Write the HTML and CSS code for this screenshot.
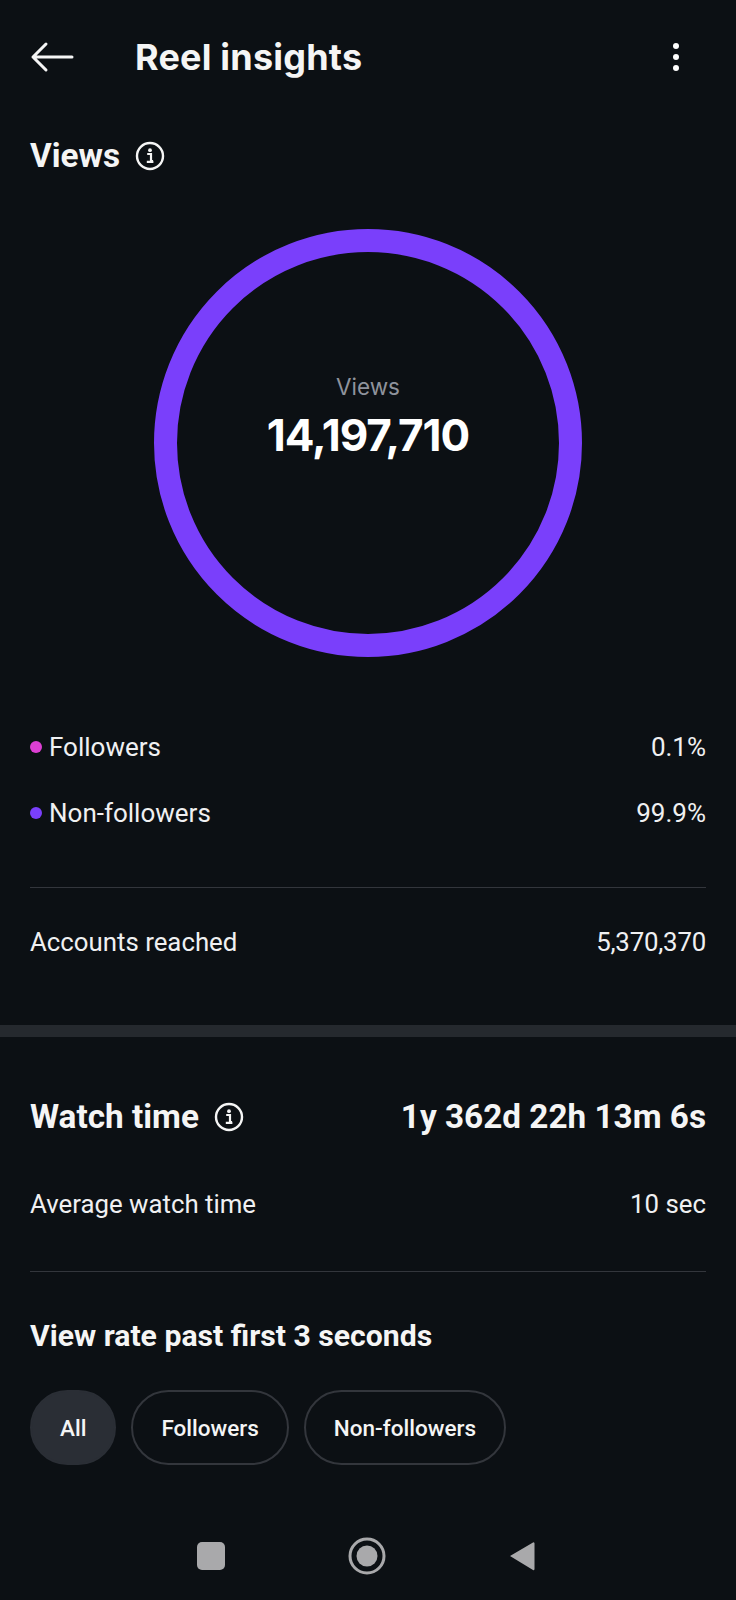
FILE: index.html
```html
<!DOCTYPE html>
<html lang="en">
<head>
<meta charset="utf-8">
<title>Reel insights</title>
<link rel="stylesheet" href="styles.css">
</head>
<body>
<div class="screen">
  <header class="topbar">
    <svg class="back" viewBox="0 0 44 32" width="44" height="32"><path d="M42 16H3M16 3 3 16l13 13" fill="none" stroke="#f5f5f5" stroke-width="3" stroke-linecap="round" stroke-linejoin="round"/></svg>
    <h1 class="title">Reel insights</h1>
    <svg class="more" viewBox="0 0 8 32" width="8" height="32"><circle cx="4" cy="5" r="3" fill="#fff"/><circle cx="4" cy="16" r="3" fill="#fff"/><circle cx="4" cy="27" r="3" fill="#fff"/></svg>
  </header>

  <section class="views">
    <div class="heading">
      <h2 class="h2">Views</h2>
      <svg class="info" viewBox="0 0 30 30" width="30" height="30"><circle cx="15" cy="15" r="13" fill="none" stroke="#f5f5f5" stroke-width="2.4"/><circle cx="15" cy="9.2" r="1.9" fill="#f5f5f5"/><path d="M12.2 13h3.8v7.2h2M11.8 20.8h6.6" fill="none" stroke="#f5f5f5" stroke-width="2.2"/></svg>
    </div>
    <div class="ring">
      <span class="ring-label">Views</span>
      <span class="ring-value">14,197,710</span>
    </div>
    <div class="row legend"><span class="key"><i class="dot pink"></i>Followers</span><span>0.1%</span></div>
    <div class="row legend second"><span class="key"><i class="dot violet"></i>Non-followers</span><span>99.9%</span></div>
    <hr class="rule rule-a">
    <div class="row reached"><span>Accounts reached</span><span class="num">5,370,370</span></div>
  </section>

  <div class="band"></div>

  <section class="watch">
    <div class="row watch-head">
      <div class="heading">
        <h2 class="h2">Watch time</h2>
        <svg class="info" viewBox="0 0 30 30" width="30" height="30"><circle cx="15" cy="15" r="13" fill="none" stroke="#f5f5f5" stroke-width="2.4"/><circle cx="15" cy="9.2" r="1.9" fill="#f5f5f5"/><path d="M12.2 13h3.8v7.2h2M11.8 20.8h6.6" fill="none" stroke="#f5f5f5" stroke-width="2.2"/></svg>
      </div>
      <strong class="h2">1y 362d 22h 13m 6s</strong>
    </div>
    <div class="row avg"><span>Average watch time</span><span>10 sec</span></div>
    <hr class="rule rule-b">
    <h3 class="h3">View rate past first 3 seconds</h3>
    <div class="pills">
      <span class="pill active">All</span>
      <span class="pill">Followers</span>
      <span class="pill">Non-followers</span>
    </div>
  </section>

  <nav class="sysnav">
    <svg viewBox="0 0 28 28" width="28" height="28"><rect width="28" height="28" rx="5" fill="#a9a9ab"/></svg>
    <svg viewBox="0 0 38 38" width="38" height="38"><circle cx="19" cy="19" r="17" fill="none" stroke="#a9a9ab" stroke-width="3"/><circle cx="19" cy="19" r="10.5" fill="#a9a9ab"/></svg>
    <svg viewBox="0 0 26 32" width="26" height="32"><path d="M1 16 24 2.500a1 1 0 0 1 1.500 1V29a1 1 0 0 1-1.500 1z" fill="#a9a9ab"/></svg>
  </nav>
</div>
</body>
</html>
```
FILE: styles.css
```css
* { box-sizing: border-box; }
html, body { margin: 0; background: #0c1014; }
body { font-family: Roboto, "Liberation Sans", sans-serif; color: #f5f5f5; }
.screen { width: 736px; height: 1600px; display: flex; flex-direction: column; overflow: hidden; background: #0c1014; }

.topbar { display: flex; align-items: center; height: 40px; margin-top: 37px; padding: 0 30px 0 30px; }
.back { flex: none; }
.title { flex: 1; margin: 0 0 0 61px; font: 700 36px/40px Inter, sans-serif; color: #f5f5f5; letter-spacing: 0.2px; }
.more { flex: none; margin-right: 26px; }

.views { padding: 0 30px; }
.heading { display: flex; align-items: center; gap: 15px; }
.h2 { margin: 0; font: 700 33.300px/40px Roboto, sans-serif; color: #f5f5f5; }
.views > .heading { margin-top: 59px; }
.info { flex: none; }

.ring { width: 428px; height: 428px; margin: 53px auto 0; border: 23px solid #7a3ffb; border-radius: 50%; display: flex; flex-direction: column; align-items: center; justify-content: center; padding-bottom: 54px; }
.ring-label { font: 400 22.500px/26px Inter, sans-serif; color: #8f939c; }
.ring-value { font: 700 44px/48px Inter, sans-serif; color: #fff; margin-top: 11px; letter-spacing: -1px; }

.row { display: flex; justify-content: space-between; align-items: center; font-size: 25.800px; line-height: 32px; color: #f0f0f2; }
.num { letter-spacing: -0.2px; }
.legend { margin-top: 74px; font-size: 26px; }
.legend.second { margin-top: 34px; }
.key { display: flex; align-items: center; }
.dot { width: 12px; height: 12px; border-radius: 50%; margin-right: 7px; }
.pink { background: #dd3fd3; }
.violet { background: #7a3ffb; }

.rule { border: 0; height: 1px; background: #33363c; margin: 0; }
.rule-a { margin-top: 58px; }
.reached { margin-top: 38px; }

.band { height: 12px; background: #25292e; margin-top: 67px; flex: none; }

.watch { padding: 0 30px; }
.watch-head { margin-top: 60px; height: 40px; }
.avg { margin-top: 51px; }
.rule-b { margin-top: 51px; }
.h3 { margin: 47px 0 0; font: 700 30.200px/34px Roboto, sans-serif; color: #f5f5f5; }
.pills { display: flex; gap: 15px; margin-top: 37px; }
.pill { height: 75px; display: flex; align-items: center; padding: 0 28px; border: 2px solid #33363c; border-radius: 38px; font-size: 22.500px; font-weight: 500; color: #f5f5f5; }
.pill.active { background: #2a2e35; border-color: #2a2e35; }

.sysnav { display: flex; justify-content: space-between; align-items: center; width: 338px; margin: 72px 0 0 197px; height: 38px; }
```
